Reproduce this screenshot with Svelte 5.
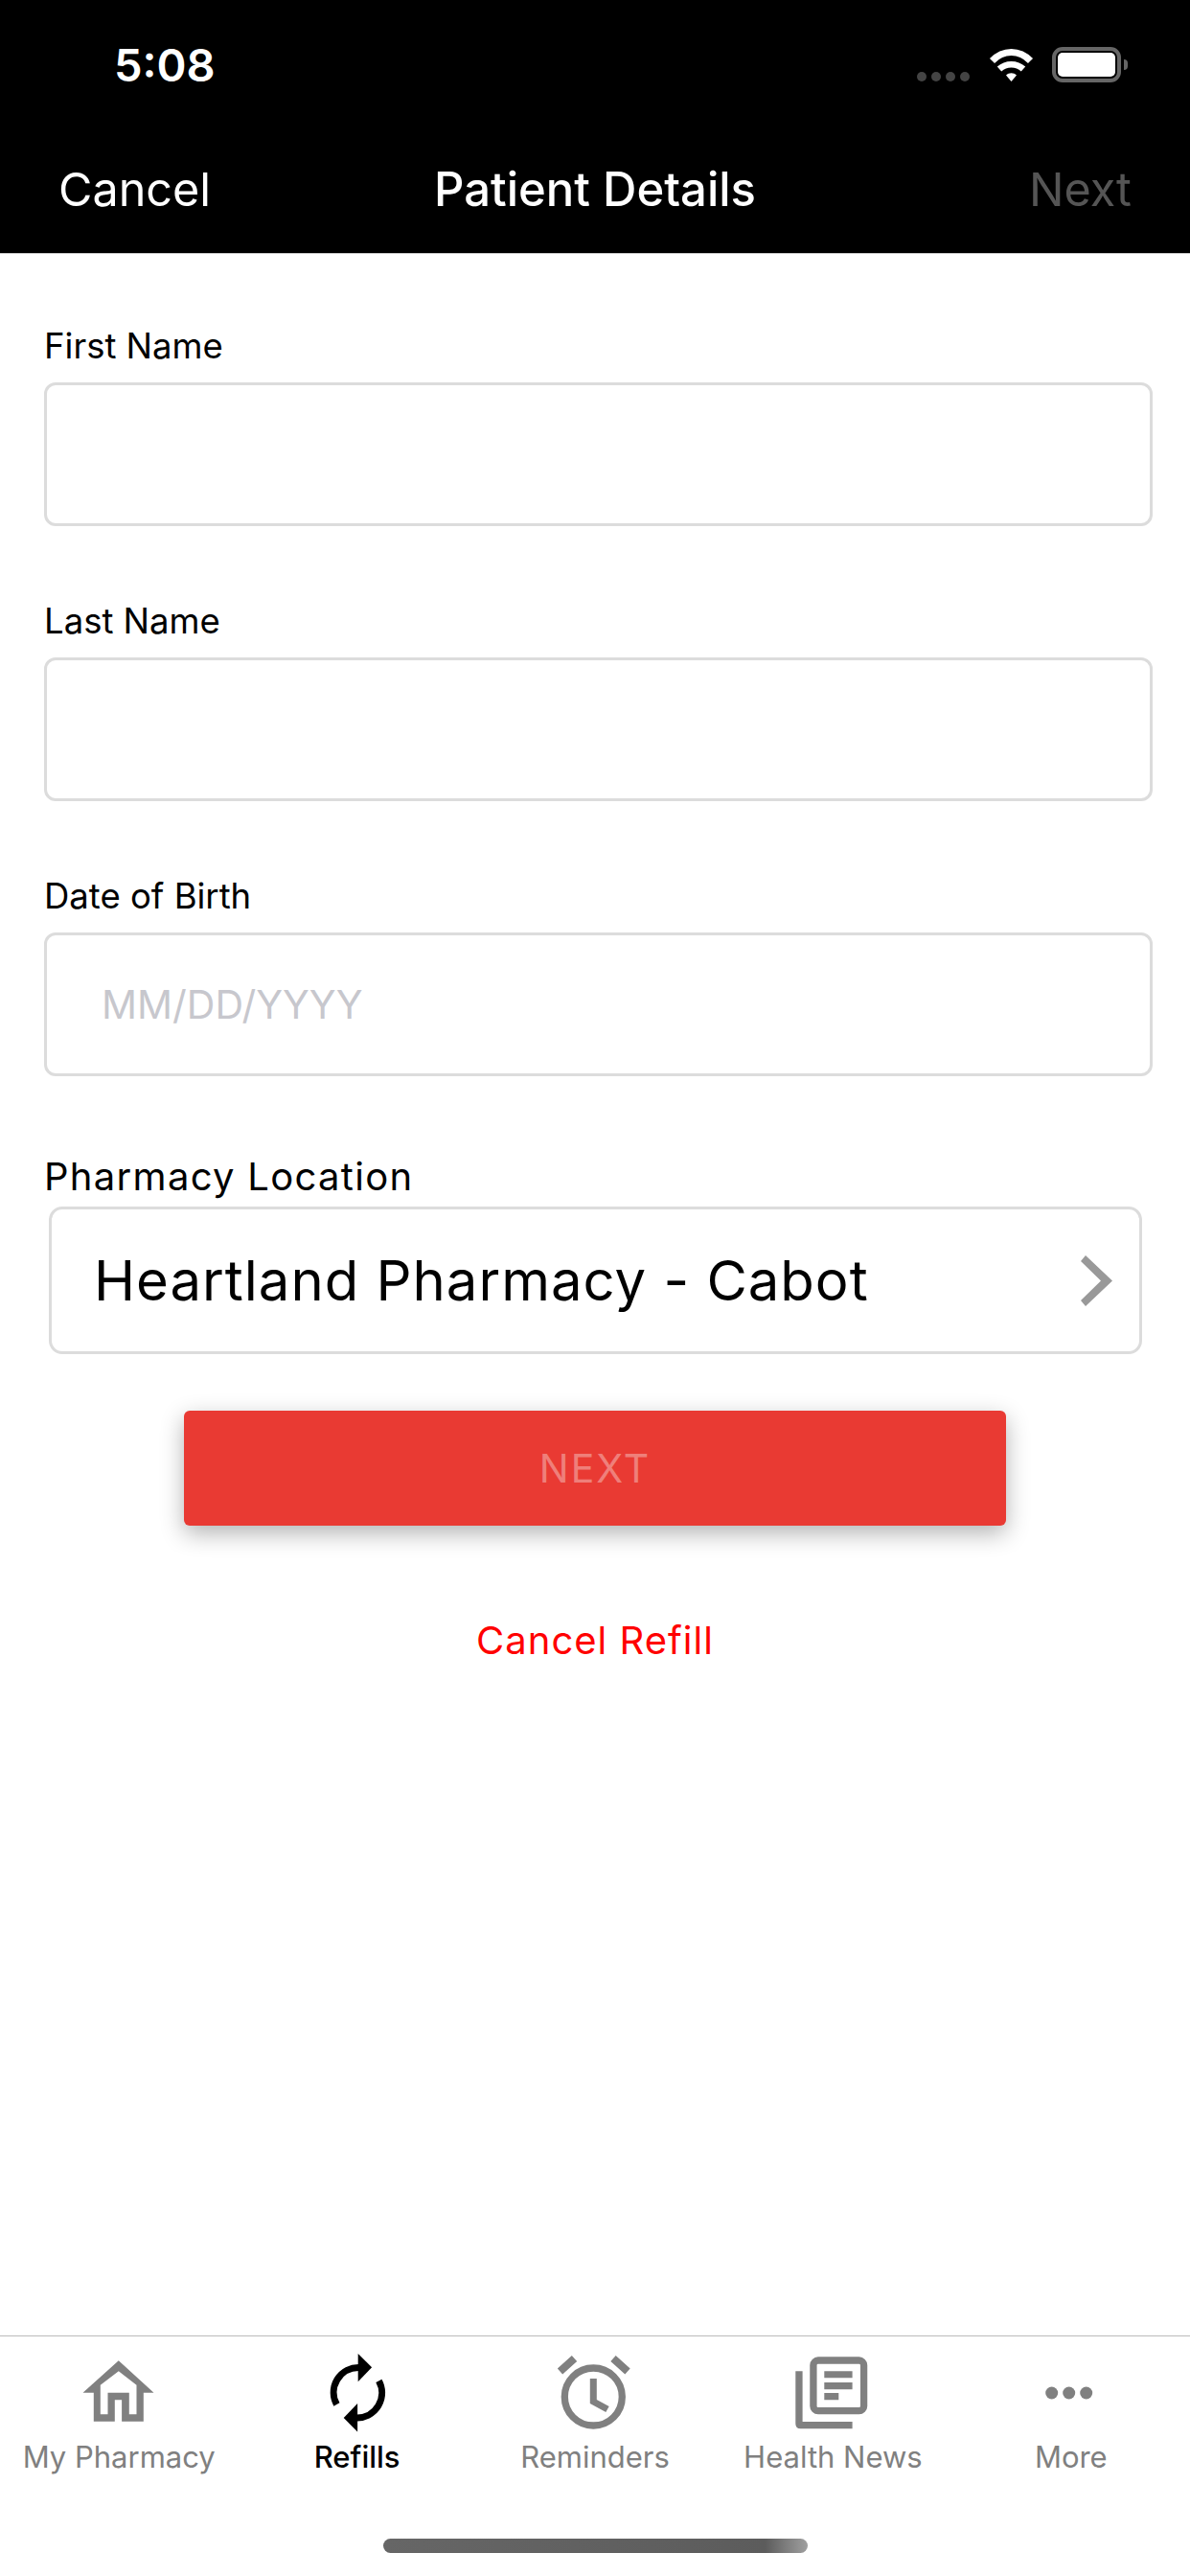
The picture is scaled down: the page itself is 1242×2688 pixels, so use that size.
<script>
  const fields = [
    { label: "First Name", placeholder: "" },
    { label: "Last Name", placeholder: "" },
    { label: "Date of Birth", placeholder: "MM/DD/YYYY" },
  ];
</script>

<div class="screen">
  <header class="top">
    <div class="status">
      <span class="time">5:08</span>
      <div class="status-icons">
        <div class="signal"><i></i><i></i><i></i><i></i></div>
        <svg class="wifi" width="47" height="36" viewBox="0 0 47 36">
          <path d="M3.5 14.5C15 2.5 32 2.5 43.5 14.5" fill="none" stroke="#fff" stroke-width="7" />
          <path d="M11 23C18 16.5 29 16.5 36 23" fill="none" stroke="#fff" stroke-width="6.5" />
          <path d="M18 29.5C21 26.5 26 26.5 29 29.5L23.5 36Z" fill="#fff" />
        </svg>
        <div class="battery"><div class="charge"></div></div>
        <div class="nub"></div>
      </div>
    </div>
    <nav class="nav">
      <span class="nav-left">Cancel</span>
      <span class="nav-title">Patient Details</span>
      <span class="nav-right">Next</span>
    </nav>
  </header>

  <main class="form">
    {#each fields as field}
      <div class="field">
        <label class="label" for={field.label}>{field.label}</label>
        <input id={field.label} class="input" placeholder={field.placeholder} />
      </div>
    {/each}

    <div class="label location-label">Pharmacy Location</div>
    <div class="location">
      <span>Heartland Pharmacy - Cabot</span>
      <svg class="chevron" width="33" height="53" viewBox="0 0 33 53">
        <path d="M5 0L33 26.5L5 53L0 47L21 26.5L0 6Z" fill="#999" />
      </svg>
    </div>

    <button class="next">NEXT</button>
    <div class="cancel-refill">Cancel Refill</div>
  </main>

  <footer class="tabs">
    <div class="tab-row">
      <div class="tab">
        <svg width="110" height="100" viewBox="-0.8 0 110 100">
          <path fill-rule="evenodd" fill="#808080" d="M54 17.3L90.7 50.7H80V80.7H57.3V58.3H50V80.7H28V50.7H16.7ZM54 28.3L35 42.7V73.3H42.7V50.7H65V73.3H72.7V42.7Z" />
        </svg>
        <span>My Pharmacy</span>
      </div>
      <div class="tab active">
        <svg width="110" height="100" viewBox="-2.4 0 110 100">
          <g>
            <path d="M31 63A26 26 0 0 1 54 24.5" fill="none" stroke="#000" stroke-width="7" />
            <path d="M53.3 10L67.7 24.3L53.3 39.3Z" fill="#000" />
          </g>
          <g transform="rotate(180 53 50.7)">
            <path d="M31 63A26 26 0 0 1 54 24.5" fill="none" stroke="#000" stroke-width="7" />
            <path d="M53.3 10L67.7 24.3L53.3 39.3Z" fill="#000" />
          </g>
        </svg>
        <span>Refills</span>
      </div>
      <div class="tab">
        <svg width="110" height="100" viewBox="0 0 110 100">
          <circle cx="53.3" cy="55" r="30" fill="none" stroke="#808080" stroke-width="7.3" />
          <path d="M53.3 36V60L68 68" fill="none" stroke="#808080" stroke-width="7" />
          <path d="M18.5 28.5L33.5 15M74 15L89 28.5" fill="none" stroke="#808080" stroke-width="8" />
        </svg>
        <span>Reminders</span>
      </div>
      <div class="tab">
        <svg width="110" height="100" viewBox="0.4 0 110 100">
          <rect x="35.3" y="17" width="52.7" height="52.7" rx="5" fill="none" stroke="#808080" stroke-width="7.3" />
          <path d="M46.7 28.3H76V35.3H46.7ZM46.7 40H76V47.3H46.7ZM46.7 51H61.7V58.3H46.7Z" fill="#808080" />
          <path d="M16.7 28.3H24V81H76V88.3H22Q16.7 88.3 16.7 83Z" fill="#808080" />
        </svg>
        <span>Health News</span>
      </div>
      <div class="tab">
        <svg width="110" height="100" viewBox="1.3 0 110 100">
          <circle cx="36" cy="51" r="6.5" fill="#808080" />
          <circle cx="54" cy="51" r="6.5" fill="#808080" />
          <circle cx="72" cy="51" r="6.5" fill="#808080" />
        </svg>
        <span>More</span>
      </div>
    </div>
    <div class="home-indicator"></div>
  </footer>
</div>

<style>
  :global(body) {
    margin: 0;
    background: #fff;
  }

  .screen {
    display: flex;
    flex-direction: column;
    height: 2688px;
    font-family: Inter, "Liberation Sans", sans-serif;
    color: #000;
  }

  .top {
    background: #000;
    color: #fff;
    border-bottom: 1px solid #ccc;
  }

  .status {
    display: flex;
    justify-content: space-between;
    height: 132px;
    padding: 0 65px 0 119px;
  }

  .time {
    margin-top: 40px;
    font-size: 47px;
    line-height: 56px;
    font-weight: 600;
  }

  .status-icons {
    display: flex;
    align-items: flex-start;
    padding-top: 49px;
  }

  .signal {
    display: flex;
    gap: 5px;
    margin: 26px 20px 0 0;
  }

  .signal i {
    width: 10px;
    height: 10px;
    border-radius: 50%;
    background: #444;
  }

  .battery {
    box-sizing: border-box;
    width: 72px;
    height: 37px;
    margin-left: 19px;
    padding: 2px;
    border: 4px solid #666;
    border-radius: 11px;
  }

  .charge {
    height: 100%;
    background: #fff;
    border-radius: 5px;
  }

  .nub {
    width: 4px;
    height: 11px;
    margin: 13px 0 0 3px;
    background: #666;
    border-radius: 0 4px 4px 0;
  }

  .nav {
    display: grid;
    grid-template-columns: 1fr auto 1fr;
    align-items: center;
    height: 132px;
    padding: 0 61px;
    font-size: 48.5px;
    line-height: 60px;
  }

  .nav-title {
    font-weight: 500;
    font-size: 49px;
  }

  .nav-right {
    justify-self: end;
    color: #555;
  }

  .form {
    flex: 1;
    display: flex;
    flex-direction: column;
    padding: 74px 39px 0 46px;
  }

  .field {
    margin-bottom: 77px;
  }

  .label {
    display: block;
    font-size: 36.5px;
    line-height: 44px;
    margin-bottom: 16px;
  }

  .input {
    display: block;
    box-sizing: border-box;
    width: 100%;
    height: 150px;
    padding: 0 57px;
    background: #fff;
    border: 3px solid #dcdcdc;
    border-radius: 12px;
    outline: none;
    font-family: inherit;
    font-size: 41px;
  }

  .input::placeholder {
    color: #c7c7cd;
    opacity: 1;
  }

  .location-label {
    margin: 6px 0 9px;
    font-size: 40px;
    letter-spacing: 1.3px;
  }

  .location {
    display: flex;
    align-items: center;
    justify-content: space-between;
    box-sizing: border-box;
    width: 1141px;
    height: 154px;
    margin-left: 5px;
    padding: 0 28px 0 44px;
    border: 3px solid #dcdcdc;
    border-radius: 14px;
    font-size: 58px;
    letter-spacing: 1px;
  }

  .next {
    align-self: center;
    width: 858px;
    height: 120px;
    margin: 59px 0 0 -7px;
    background: #e93a33;
    border: none;
    border-radius: 6px;
    box-shadow: 0 8px 24px rgba(0, 0, 0, 0.3);
    color: #ef7f7a;
    font-family: inherit;
    font-size: 41px;
    letter-spacing: 2px;
  }

  .cancel-refill {
    margin: 98px 0 0 -7px;
    text-align: center;
    color: #f00;
    font-size: 40px;
    letter-spacing: 1px;
    line-height: 44px;
  }

  .tabs {
    border-top: 1px solid #bbb;
  }

  .tab-row {
    display: grid;
    grid-template-columns: repeat(5, 1fr);
  }

  .tab {
    display: flex;
    flex-direction: column;
    align-items: center;
    padding-top: 8px;
    color: #808080;
    font-size: 31px;
    line-height: 36px;
  }

  .tab svg {
    display: block;
  }

  .active {
    color: #000;
    font-weight: 500;
  }

  .home-indicator {
    width: 443px;
    height: 15px;
    margin: 67px auto 24px;
    border-radius: 8px;
    background: linear-gradient(to right, #666 0%, #5c5c5c 90%, #a0a0a0 100%);
  }
</style>
